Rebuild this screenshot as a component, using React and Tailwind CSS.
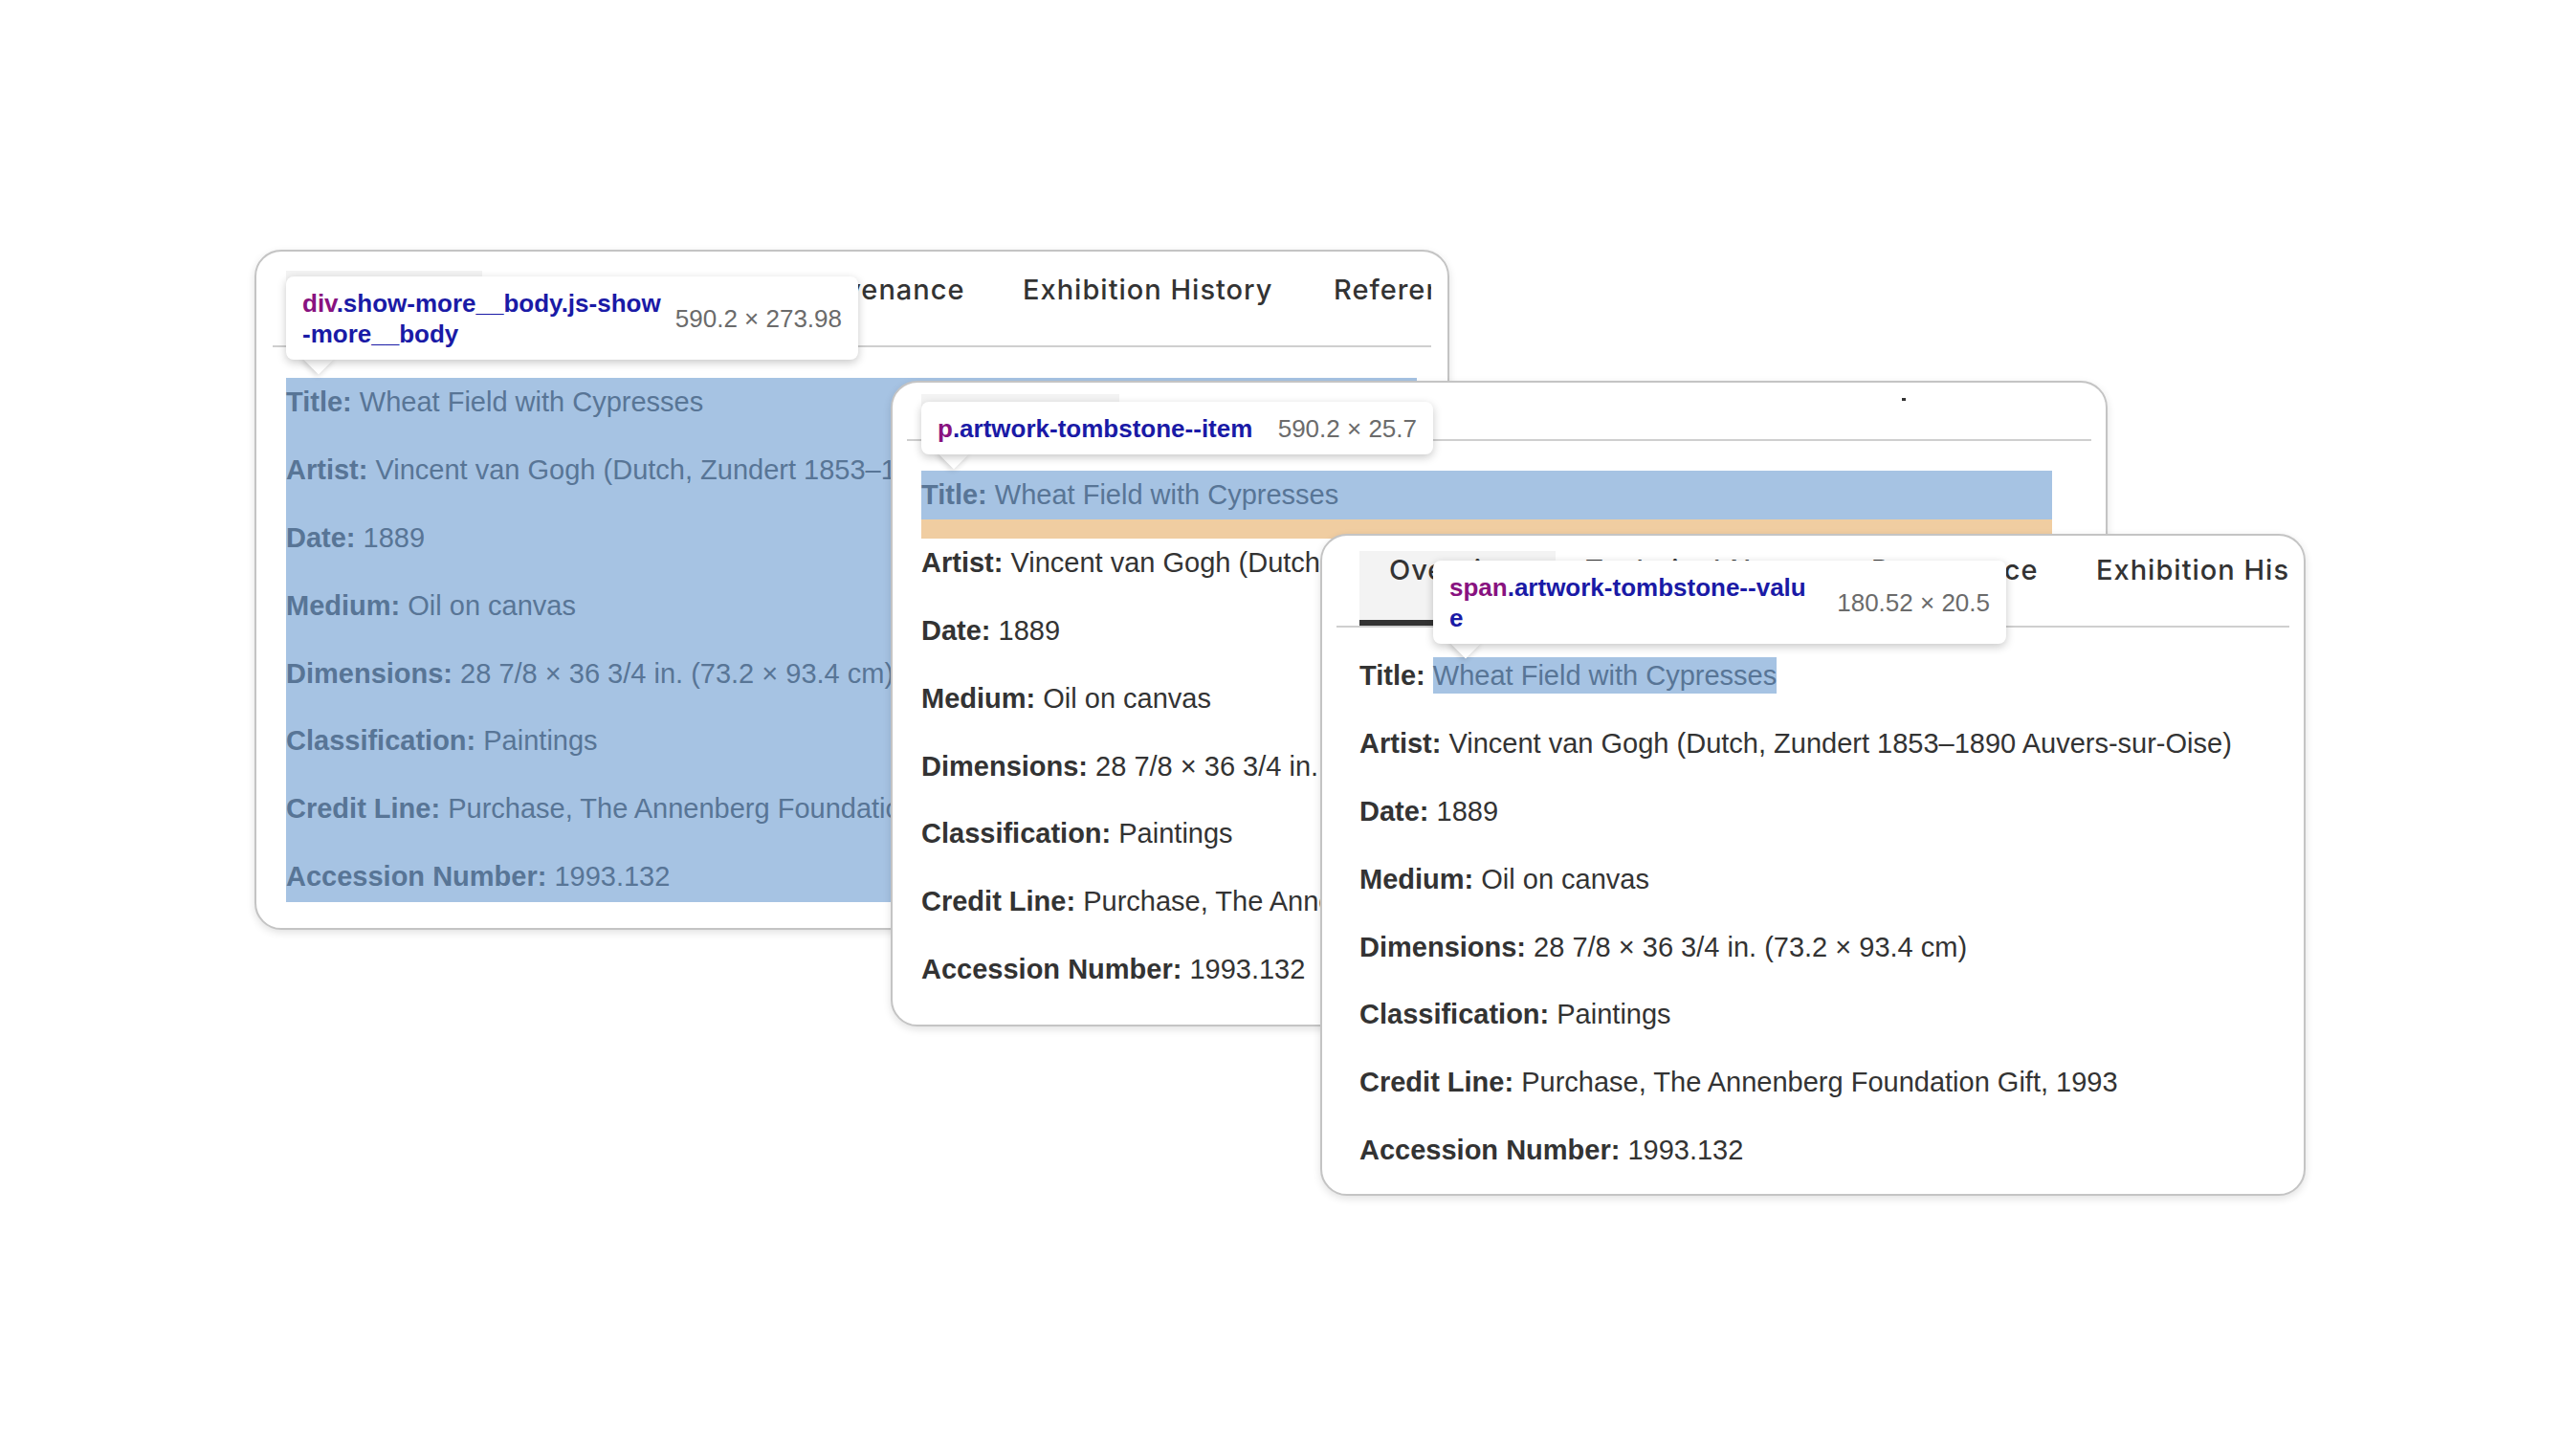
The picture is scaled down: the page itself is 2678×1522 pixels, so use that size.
import React from "react";

// tombstone rows shown in every card
const rows = [
  ["Title:", "Wheat Field with Cypresses"],
  ["Artist:", "Vincent van Gogh (Dutch, Zundert 1853–1890 Auvers-sur-Oise)"],
  ["Date:", "1889"],
  ["Medium:", "Oil on canvas"],
  ["Dimensions:", "28 7/8 × 36 3/4 in. (73.2 × 93.4 cm)"],
  ["Classification:", "Paintings"],
  ["Credit Line:", "Purchase, The Annenberg Foundation Gift, 1993"],
  ["Accession Number:", "1993.132"],
];

const tabs = [
  ["Overview", "w-[205px]"],
  ["Technical Notes", "w-[299px]"],
  ["Provenance", "w-[235px]"],
  ["Exhibition History", "w-[325px]"],
  ["References", "w-[300px]"],
];

const body = "font-['Liberation_Sans',Arial,sans-serif] text-[29px]";

const TabBar = ({ indent }) => (
  <div className="overflow-hidden border-b-2 border-[#cfcfcf]">
    <div className={`flex ${indent}`}>
      {tabs.map(([label, w], i) => (
        <div
          key={label}
          className={`${w} shrink-0 h-[78px] pt-[3px] px-[31px] whitespace-nowrap font-['Inter',sans-serif] font-medium text-[29px] leading-[34px] tracking-[1px] text-[#333] ${
            i === 0 ? "bg-[#f3f3f3] border-b-[6px] border-[#333]" : ""
          }`}
        >
          {label}
        </div>
      ))}
    </div>
  </div>
);

const Row = ({ label, value, last, className = "" }) => (
  <p
    className={`h-[51.4px] leading-[51.4px] whitespace-nowrap ${
      last ? "" : "mb-[19.5px]"
    } ${className}`}
  >
    <span className="font-bold">{label}</span> {value}
  </p>
);

const Tooltip = ({ pos, size, tag, lines, dims }) => (
  <div className={`absolute ${pos} ${size}`}>
    <div className="absolute left-[23px] bottom-[-11px] w-[22px] h-[22px] rotate-45 bg-white shadow-[0_2px_6px_rgba(0,0,0,0.2)]" />
    <div className="relative h-full bg-white rounded-[8px] shadow-[0_3px_10px_rgba(0,0,0,0.22)] px-[17px] flex items-center justify-between font-['Liberation_Sans',Arial,sans-serif] text-[26px] leading-[32px]">
      <div className="font-bold text-[#1a1aa6] whitespace-nowrap">
        <span className="text-[#881280]">{tag}</span>
        {lines[0]}
        {lines[1] && (
          <>
            <br />
            {lines[1]}
          </>
        )}
      </div>
      <div className="text-[#6b6b6b] whitespace-nowrap">{dims}</div>
    </div>
  </div>
);

const card =
  "absolute bg-white rounded-[28px] border-2 border-[#c4c4c4] overflow-hidden shadow-[0_3px_8px_rgba(0,0,0,0.12)]";

export default function App() {
  return (
    <div className="relative w-[2678px] h-[1522px] bg-white overflow-hidden">
      {/* back card: whole body highlighted */}
      <div className={`${card} left-[266px] top-[261px] w-[1249px] h-[711px]`}>
        <div className="px-[17px] pt-[20px]">
          <TabBar indent="pl-[14px]" />
          <div className={`ml-[14px] mt-[32px] w-[1182px] bg-[#a6c3e3] text-[#587596] ${body}`}>
            {rows.map(([l, v], i) => (
              <Row key={l} label={l} value={v} last={i === rows.length - 1} />
            ))}
          </div>
        </div>
        <Tooltip
          pos="left-[31px] top-[26px]"
          size="w-[598px] h-[87px]"
          tag="div"
          lines={[".show-more__body.js-show", "-more__body"]}
          dims="590.2 × 273.98"
        />
      </div>

      {/* middle card: one item highlighted with its margin */}
      <div className={`${card} left-[931px] top-[398px] w-[1272px] h-[675px]`}>
        <div className="px-[15px]">
          <div className="flex items-start h-[61px] border-b-2 border-[#cfcfcf] pl-[15px]">
            <div className="w-[207px] h-[47px] mt-[12px] shrink-0 bg-[#f3f3f3] border-b-[6px] border-[#333]" />
            <div className="ml-[818px] mt-[16px] w-[4px] h-[3px] shrink-0 bg-[#333]" />
          </div>
          <div className={`ml-[15px] mt-[31px] w-[1182px] text-[#333] ${body}`}>
            <Row label={rows[0][0]} value={rows[0][1]} last className="bg-[#a6c3e3] text-[#587596]" />
            <div className="h-[19.5px] bg-[#f0cda1]" />
            {rows.slice(1).map(([l, v], i) => (
              <Row key={l} label={l} value={v} last={i === rows.length - 2} />
            ))}
          </div>
        </div>
        <Tooltip
          pos="left-[30px] top-[20px]"
          size="w-[535px] h-[55px]"
          tag="p"
          lines={[".artwork-tombstone--item"]}
          dims="590.2 × 25.7"
        />
      </div>

      {/* front card: value span highlighted */}
      <div className={`${card} left-[1380px] top-[558px] w-[1030px] h-[692px]`}>
        <div className="px-[15px] pt-[16px]">
          <TabBar indent="pl-[24px]" />
          <div className={`ml-[24px] mt-[25px] text-[#333] ${body}`}>
            <p className="h-[51.4px] leading-[51.4px] mb-[19.5px] whitespace-nowrap">
              <span className="font-bold">{rows[0][0]}</span>{" "}
              <span className="inline-block leading-[38px] bg-[#a6c3e3] text-[#587596]">
                {rows[0][1]}
              </span>
            </p>
            {rows.slice(1).map(([l, v], i) => (
              <Row key={l} label={l} value={v} last={i === rows.length - 2} />
            ))}
          </div>
        </div>
        <Tooltip
          pos="left-[116px] top-[26px]"
          size="w-[599px] h-[87px]"
          tag="span"
          lines={[".artwork-tombstone--valu", "e"]}
          dims="180.52 × 20.5"
        />
      </div>
    </div>
  );
}
